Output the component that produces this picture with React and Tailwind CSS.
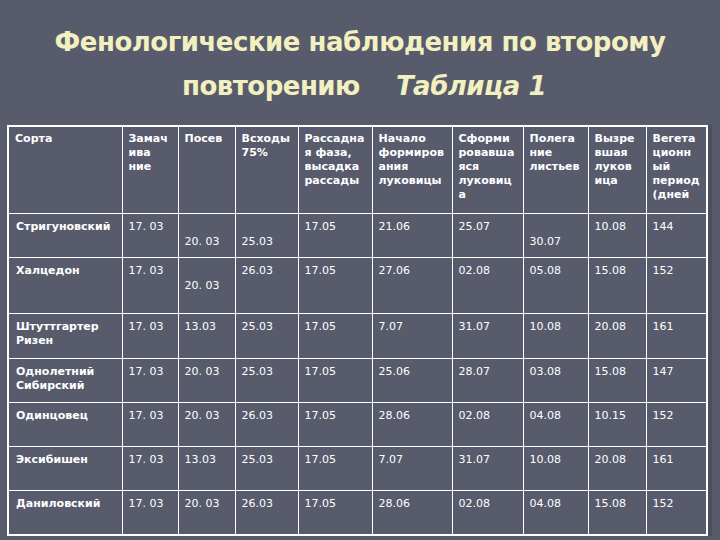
import React from 'react';

const cols = [114, 56, 57, 63, 74, 80, 71, 65, 58, 59];

const head = [
  'Сорта',
  'Замач ива ние',
  'Посев',
  'Всходы 75%',
  'Рассадна я фаза, высадка рассады',
  'Начало формиров ания луковицы',
  'Сформи ровавша яся луковиц а',
  'Полега ние листьев',
  'Вызре вшая луков ица',
  'Вегета ционн ый период (дней',
];

// "_" prefix = value sits one line lower in the cell
const rows = [
  { name: 'Стригуновский', h: 44, v: ['17. 03', '_20. 03', '_25.03', '17.05', '21.06', '25.07', '_30.07', '10.08', '144'] },
  { name: 'Халцедон', h: 56, v: ['17. 03', '_20. 03', '26.03', '17.05', '27.06', '02.08', '05.08', '15.08', '152'] },
  { name: 'Штуттгартер Ризен', h: 45, v: ['17. 03', '13.03', '25.03', '17.05', '7.07', '31.07', '10.08', '20.08', '161'] },
  { name: 'Однолетний Сибирский', h: 44, v: ['17. 03', '20. 03', '25.03', '17.05', '25.06', '28.07', '03.08', '15.08', '147'] },
  { name: 'Одинцовец', h: 44, v: ['17. 03', '20. 03', '26.03', '17.05', '28.06', '02.08', '04.08', '10.15', '152'] },
  { name: 'Эксибишен', h: 44, v: ['17. 03', '13.03', '25.03', '17.05', '7.07', '31.07', '10.08', '20.08', '161'] },
  { name: 'Даниловский', h: 45, v: ['17. 03', '20. 03', '26.03', '17.05', '28.06', '02.08', '04.08', '15.08', '152'] },
];

export default function App() {
  return (
    <div className="w-[720px] h-[540px] overflow-hidden bg-[#585b6c] font-['DejaVu_Sans',sans-serif]">
      <div className="pt-[20px] text-center text-[#f2f0c0] font-bold text-[26px] leading-[44px] tracking-[-0.5px]">
        <div>Фенологические наблюдения по второму</div>
        <div className="pl-[8px]">
          повторению<span className="inline-block w-[36px]" />
          <i className="text-[26px]">Таблица 1</i>
        </div>
      </div>
      <div className="pl-[7px] pt-[17px]">
        <table className="table-fixed border-collapse border-2 border-white text-white text-[11px] leading-[14px] shadow-[4px_0_0_#4c4f5e]">
          <colgroup>
            {cols.map((w, i) => (
              <col key={i} style={{ width: w }} />
            ))}
          </colgroup>
          <thead>
            <tr className="h-[87px]">
              {head.map((t, i) => (
                <th key={i} className="border border-white align-top text-left font-bold px-[6px] pt-[5px] break-words">
                  {t}
                </th>
              ))}
            </tr>
          </thead>
          <tbody>
            {rows.map((r) => (
              <tr key={r.name} style={{ height: r.h }}>
                <td className="border border-white align-top font-bold px-[7px] pt-[6px]">{r.name}</td>
                {r.v.map((x, i) => (
                  <td key={i} className="border border-white align-top px-[6px] pt-[6px] whitespace-nowrap">
                    {x.startsWith('_') ? <div className="pt-[15px]">{x.slice(1)}</div> : x}
                  </td>
                ))}
              </tr>
            ))}
          </tbody>
        </table>
      </div>
    </div>
  );
}
